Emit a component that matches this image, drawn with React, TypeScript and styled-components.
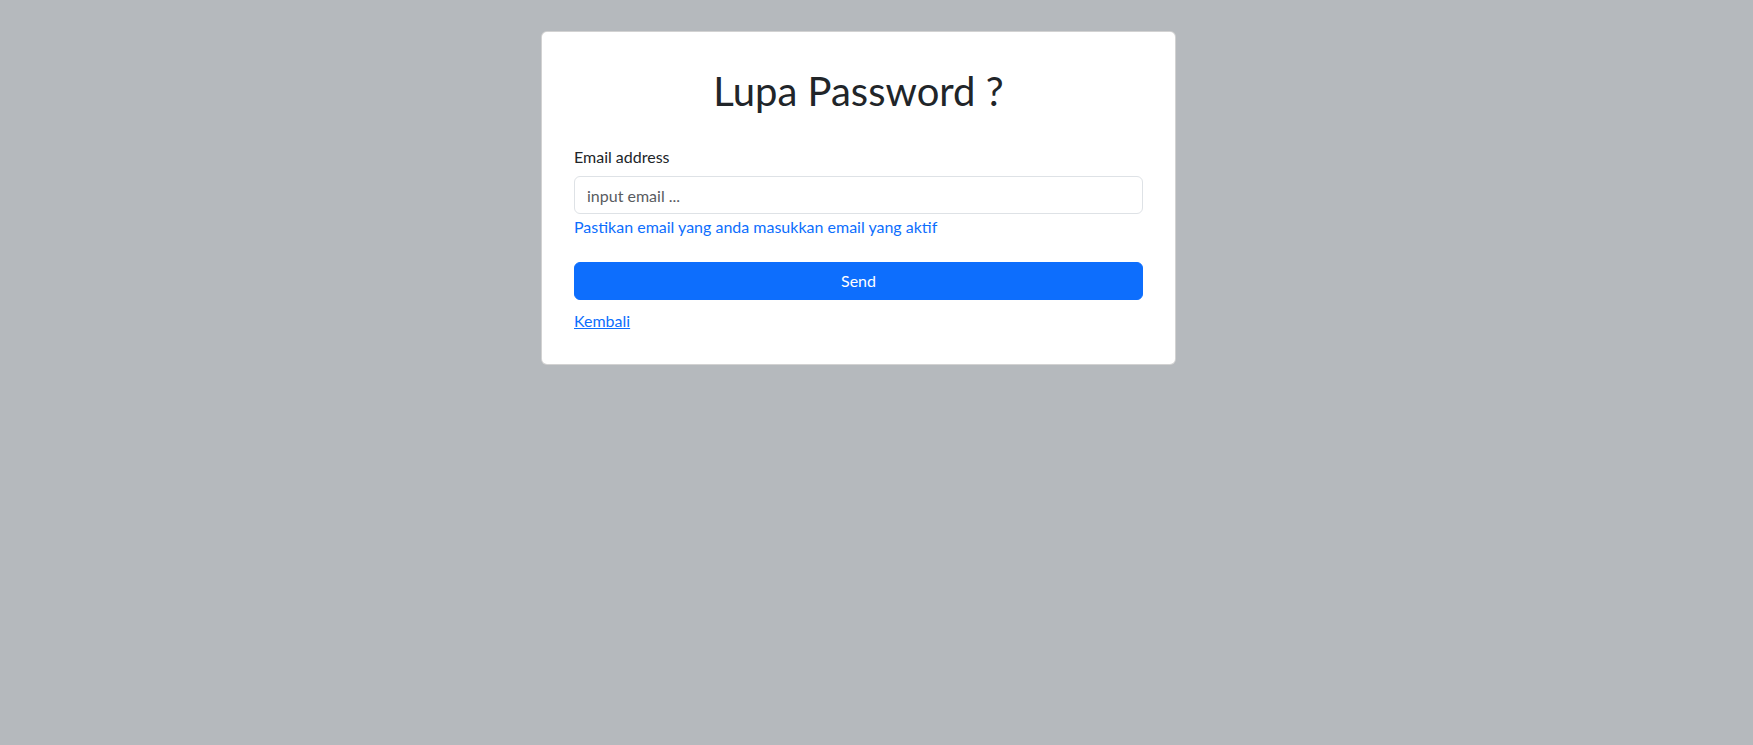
import React from "react";
import styled, { createGlobalStyle } from "styled-components";

const Global = createGlobalStyle`
  html, body { margin: 0; padding: 0; }
  body {
    background: #b5b9bd;
    font-family: Lato, "Noto Sans", "Liberation Sans", sans-serif;
    color: #212529;
    min-height: 745px;
  }
  * { box-sizing: border-box; }
`;

const Page = styled.div`
  display: flex;
  justify-content: center;
  padding-top: 31px;
  padding-right: 36px;
`;

const Card = styled.div`
  width: 635px;
  background: #fff;
  border: 1px solid rgba(0, 0, 0, 0.175);
  border-radius: 6px;
  padding: 35px 32px 31px;
  display: flex;
  flex-direction: column;
`;

const Title = styled.h1`
  margin: 0 0 30px;
  font-size: 40px;
  line-height: 48px;
  font-weight: 400;
  text-align: center;
  color: #212529;
`;

const Label = styled.label`
  display: block;
  font-size: 16px;
  line-height: 24px;
  margin-bottom: 7px;
  color: #212529;
`;

const Input = styled.input`
  display: block;
  width: 100%;
  height: 38px;
  padding: 6px 12px;
  font-family: inherit;
  font-size: 16px;
  line-height: 24px;
  color: #212529;
  background: #fff;
  border: 1px solid #dee2e6;
  border-radius: 6px;
  outline: none;
  &::placeholder { color: #595c5f; opacity: 1; }
`;

const Help = styled.div`
  font-size: 16px;
  line-height: 24px;
  color: #0d6efd;
  margin-top: 1px;
  margin-bottom: 23px;
`;

const Button = styled.button`
  width: 100%;
  height: 38px;
  border: 1px solid #0d6efd;
  border-radius: 6px;
  background: #0d6efd;
  color: #fff;
  font-family: inherit;
  font-size: 16px;
  line-height: 24px;
  cursor: pointer;
`;

const Back = styled.a`
  align-self: flex-start;
  margin-top: 9px;
  font-size: 16px;
  line-height: 24px;
  color: #0d6efd;
  text-decoration: underline;
`;

export default function App() {
  return (
    <>
      <Global />
      <Page>
        <Card>
          <Title>Lupa Password ?</Title>
          <Label htmlFor="email">Email address</Label>
          <Input id="email" type="email" placeholder="input email ..." />
          <Help>Pastikan email yang anda masukkan email yang aktif</Help>
          <Button type="button">Send</Button>
          <Back href="#">Kembali</Back>
        </Card>
      </Page>
    </>
  );
}
